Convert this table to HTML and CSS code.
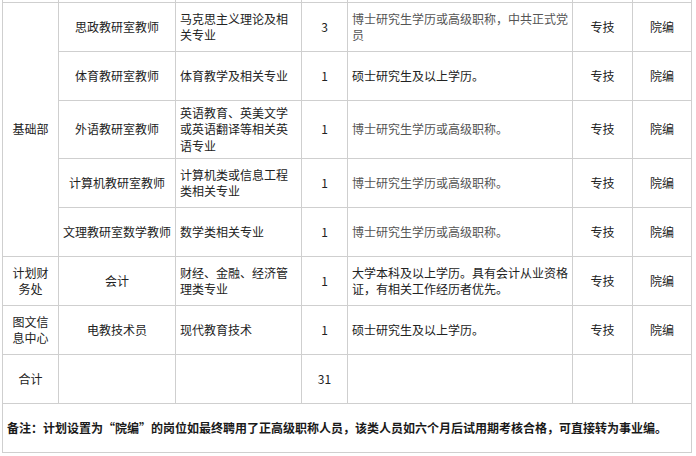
FILE: index.html
```html
<!DOCTYPE html>
<html lang="zh-CN">
<head>
<meta charset="utf-8">
<title>岗位计划表</title>
<link rel="stylesheet" href="styles.css">
</head>
<body>
<div class="sheet">
  <div class="c cut"></div><div class="c cut"></div><div class="c cut"></div><div class="c cut"></div><div class="c cut"></div><div class="c cut"></div><div class="c cut"></div>

  <div class="c span5">基础部</div>
  <div class="c">思政教研室教师</div>
  <div class="c l">马克思主义理论及相关专业</div>
  <div class="c">3</div>
  <div class="c l soft">博士研究生学历或高级职称，中共正式党<br>员</div>
  <div class="c">专技</div>
  <div class="c">院编</div>

  <div class="c">体育教研室教师</div>
  <div class="c l">体育教学及相关专业</div>
  <div class="c">1</div>
  <div class="c l">硕士研究生及以上学历。</div>
  <div class="c">专技</div>
  <div class="c">院编</div>

  <div class="c">外语教研室教师</div>
  <div class="c l">英语教育、英美文学或英语翻译等相关英语专业</div>
  <div class="c">1</div>
  <div class="c l soft">博士研究生学历或高级职称。</div>
  <div class="c">专技</div>
  <div class="c">院编</div>

  <div class="c">计算机教研室教师</div>
  <div class="c l">计算机类或信息工程类相关专业</div>
  <div class="c">1</div>
  <div class="c l soft">博士研究生学历或高级职称。</div>
  <div class="c">专技</div>
  <div class="c">院编</div>

  <div class="c">文理教研室数学教师</div>
  <div class="c l">数学类相关专业</div>
  <div class="c">1</div>
  <div class="c l soft">博士研究生学历或高级职称。</div>
  <div class="c">专技</div>
  <div class="c">院编</div>

  <div class="c">计划财务处</div>
  <div class="c">会计</div>
  <div class="c l">财经、金融、经济管理类专业</div>
  <div class="c">1</div>
  <div class="c l">大学本科及以上学历。具有会计从业资格<br>证，有相关工作经历者优先。</div>
  <div class="c">专技</div>
  <div class="c">院编</div>

  <div class="c">图文信息中心</div>
  <div class="c">电教技术员</div>
  <div class="c l">现代教育技术</div>
  <div class="c">1</div>
  <div class="c l">硕士研究生及以上学历。</div>
  <div class="c">专技</div>
  <div class="c">院编</div>

  <div class="c">合计</div>
  <div class="c"></div>
  <div class="c"></div>
  <div class="c">31</div>
  <div class="c"></div>
  <div class="c"></div>
  <div class="c"></div>

  <div class="c l note">备注：计划设置为“院编”的岗位如最终聘用了正高级职称人员，该类人员如六个月后试用期考核合格，可直接转为事业编。</div>
</div>
</body>
</html>
```

FILE: styles.css
```css
html, body {
  margin: 0;
  padding: 0;
  background: #ffffff;
}

body {
  font-family: "Noto Sans CJK SC", "Noto Sans", sans-serif;
  font-size: 12px;
  color: #222222;
}

.sheet {
  display: grid;
  grid-template-columns: 56px 117px 126px 46px 225px 60px 59px;
  grid-template-rows: 3px 49px 49px 58px 49px 49px 49px 49px 49px 49px;
  width: max-content;
  margin-left: 2px;
  border-left: 1px solid #cfcfcf;
}

.c {
  box-sizing: border-box;
  display: flex;
  align-items: center;
  justify-content: center;
  text-align: center;
  padding: 0 4px;
  line-height: 16.5px;
  border-right: 1px solid #cfcfcf;
  border-bottom: 1px solid #cfcfcf;
  overflow: hidden;
}

.l {
  justify-content: flex-start;
  text-align: left;
}

.soft {
  color: #555555;
}

.span5 {
  grid-row: span 5;
}

.note {
  grid-column: 1 / -1;
  font-weight: bold;
  color: #1a1a1a;
}
```
